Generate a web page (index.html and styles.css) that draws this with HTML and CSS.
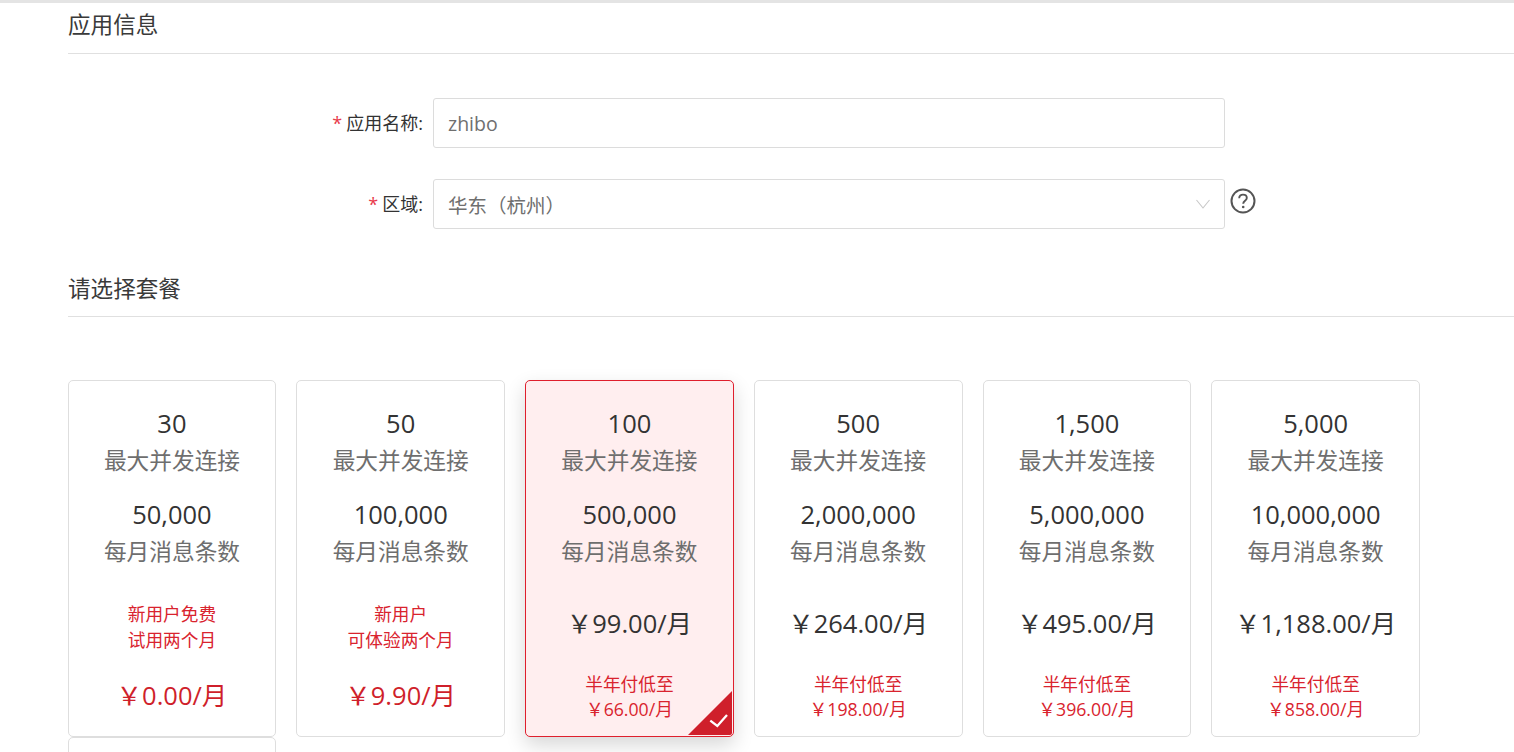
FILE: index.html
```html
<!DOCTYPE html>
<html lang="zh-CN">
<head>
<meta charset="utf-8">
<title>应用信息</title>
<link rel="stylesheet" href="styles.css">
</head>
<body>
<div class="page">
  <h2 class="section-title first">应用信息</h2>
  <form class="form">
    <div class="form-row">
      <label class="form-label"><span class="req">*</span>应用名称:</label>
      <div class="control"><span class="value">zhibo</span></div>
    </div>
    <div class="form-row">
      <label class="form-label"><span class="req">*</span>区域:</label>
      <div class="control select">
        <span class="value">华东（杭州）</span>
        <svg class="chevron" width="14" height="10" viewBox="0 0 14 10"><path d="M.5 1l6.500 8L13.500 1" fill="none" stroke="#c8c8c8" stroke-width="1.100"/></svg>
      </div>
      <svg class="help" width="26" height="26" viewBox="0 0 26 26">
        <circle cx="13" cy="13" r="11.500" fill="none" stroke="#555" stroke-width="2"/>
        <path d="M9.200 10.200c0-2.200 1.700-3.600 3.800-3.600s3.800 1.300 3.800 3.300c0 2.900-3.600 2.900-3.600 5.900" fill="none" stroke="#555" stroke-width="1.900"/>
        <circle cx="13.200" cy="19" r="1.300" fill="#555"/>
      </svg>
    </div>
  </form>
  <h2 class="section-title second">请选择套餐</h2>
  <div class="plans">
    <div class="plan">
      <div class="num">30</div><div class="unit">最大并发连接</div>
      <div class="num gap">50,000</div><div class="unit">每月消息条数</div>
      <div class="promo">新用户免费<br>试用两个月</div>
      <div class="price red">￥0.00/月</div>
    </div>
    <div class="plan">
      <div class="num">50</div><div class="unit">最大并发连接</div>
      <div class="num gap">100,000</div><div class="unit">每月消息条数</div>
      <div class="promo">新用户<br>可体验两个月</div>
      <div class="price red">￥9.90/月</div>
    </div>
    <div class="plan selected">
      <div class="num">100</div><div class="unit">最大并发连接</div>
      <div class="num gap">500,000</div><div class="unit">每月消息条数</div>
      <div class="price plain">￥99.00/月</div>
      <div class="sub">半年付低至<br>￥66.00/月</div>
      <svg class="ribbon" width="44" height="44" viewBox="0 0 44 44">
        <path d="M0 44L44 0V42a2 2 0 0 1-2 2Z" fill="#cf1f2b"/>
        <path d="M22.300 29.700l7 5.300L39 24" fill="none" stroke="#fff" stroke-width="2.300"/>
      </svg>
    </div>
    <div class="plan">
      <div class="num">500</div><div class="unit">最大并发连接</div>
      <div class="num gap">2,000,000</div><div class="unit">每月消息条数</div>
      <div class="price plain">￥264.00/月</div>
      <div class="sub">半年付低至<br>￥198.00/月</div>
    </div>
    <div class="plan">
      <div class="num">1,500</div><div class="unit">最大并发连接</div>
      <div class="num gap">5,000,000</div><div class="unit">每月消息条数</div>
      <div class="price plain">￥495.00/月</div>
      <div class="sub">半年付低至<br>￥396.00/月</div>
    </div>
    <div class="plan">
      <div class="num">5,000</div><div class="unit">最大并发连接</div>
      <div class="num gap">10,000,000</div><div class="unit">每月消息条数</div>
      <div class="price plain">￥1,188.00/月</div>
      <div class="sub">半年付低至<br>￥858.00/月</div>
    </div>
    <div class="plan"></div>
  </div>
</div>
</body>
</html>
```
FILE: styles.css
```css
* { box-sizing: border-box; }
html, body { margin: 0; height: 100%; overflow: hidden; background: #fff; }
body {
  font-family: "Open Sans", "Noto Sans CJK SC", sans-serif;
  color: #333;
}
.page {
  border-top: 3px solid #e4e4e4;
  padding-left: 68px;
}
.section-title {
  margin: 0;
  font-size: 22.600px;
  font-weight: 400;
  line-height: 34px;
  color: #3a3a3a;
  border-bottom: 1px solid #e0e0e0;
}
.section-title.first { padding: 5px 0 11px; height: 51px; }
.section-title.second { padding: 0 0 11px; height: 45px; margin-top: 43px; }
.form { padding-top: 44px; }
.form-row { display: flex; align-items: flex-start; margin-bottom: 31px; }
.form-row:last-child { margin-bottom: 0; }
.form-label {
  width: 355px;
  height: 50px;
  line-height: 50px;
  text-align: right;
  font-size: 18px;
  color: #333;
  white-space: nowrap;
}
.req { color: #e8384a; margin-right: 4px; }
.control {
  margin-left: 10px;
  width: 792px;
  height: 50px;
  border: 1px solid #dcdcdc;
  border-radius: 3px;
  padding: 0 14px;
  display: flex;
  align-items: center;
  justify-content: space-between;
  font-size: 19.500px;
  color: #6f6f6f;
}
.chevron { margin-top: -1px; }
.help { margin: 9px 0 0 5px; }
.plans {
  display: grid;
  grid-template-columns: repeat(6, 208.700px);
  column-gap: 20.050px;
  margin: 63px 0 0 -.4px;
}
.plan {
  position: relative;
  height: 357px;
  border: 1px solid #dedede;
  border-radius: 5px;
  padding-top: 23px;
  text-align: center;
  background: #fff;
}
.num { font-size: 25.500px; line-height: 38px; color: #333; white-space: nowrap; }
.num.gap { margin-top: 16px; }
.unit { font-size: 22.700px; line-height: 37px; color: #6e6e6e; white-space: nowrap; }
.promo { margin-top: 31px; font-size: 17.700px; line-height: 26px; color: #d9232e; }
.price { font-size: 25.500px; line-height: 40px; white-space: nowrap; }
.price.red { margin-top: 22px; color: #cf1f2b; }
.price.plain { margin-top: 33px; color: #333; }
.sub { margin-top: 29px; font-size: 17.700px; line-height: 25px; color: #d9232e; white-space: nowrap; }
.selected {
  background: #ffeeef;
  border-color: #df1f2d;
  box-shadow: 0 8px 20px rgba(0, 0, 0, .16);
}
.ribbon { position: absolute; right: .5px; bottom: 1px; }
```
